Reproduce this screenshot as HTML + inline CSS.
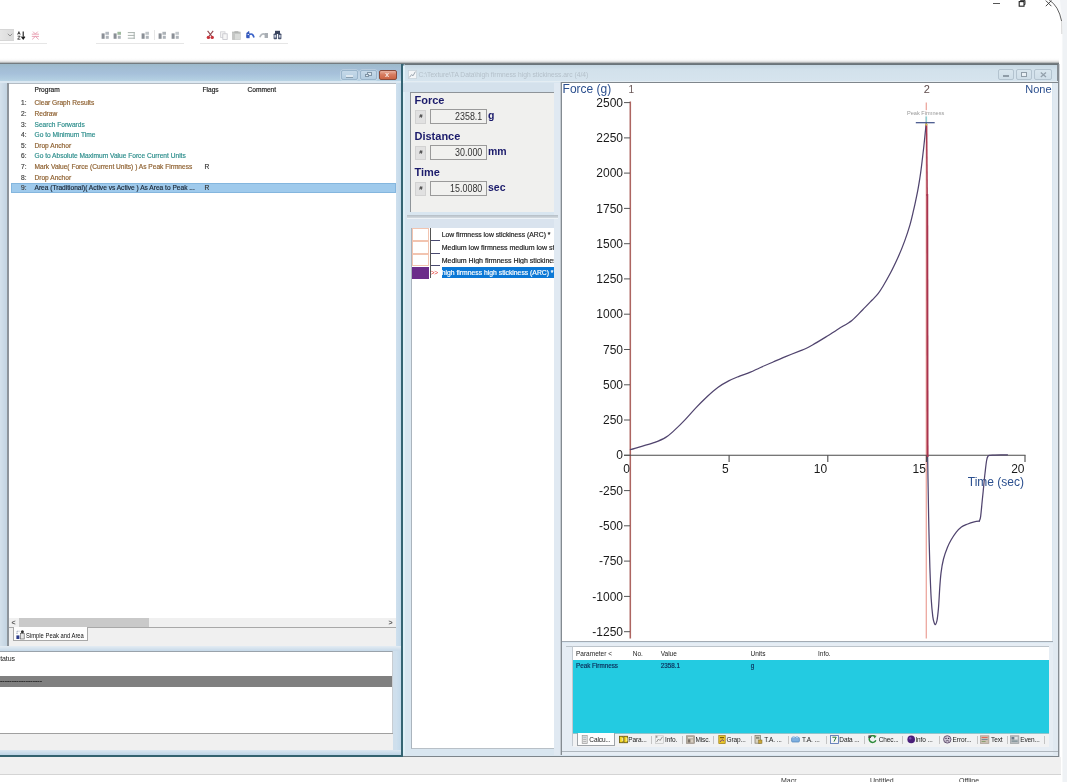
<!DOCTYPE html>
<html><head><meta charset="utf-8"><title>Texture Analyser</title>
<style>
html,body{margin:0;padding:0;}
body{width:1067px;height:782px;overflow:hidden;position:relative;background:#fff;font-family:"Liberation Sans",sans-serif;}
#root{filter:blur(0.4px);position:absolute;left:0;top:0;width:1067px;height:782px;overflow:hidden;background:#fff;}
#root div,#root span,#root svg{position:absolute;}
#root span{white-space:pre;line-height:1;}
.k{-webkit-text-stroke:0.18px currentColor;}
.b{font-weight:bold;}
</style></head><body><div id="root">

<!-- toolbar -->
<div style="left:0px;top:29px;width:14px;height:12px;background:linear-gradient(to right,#e6e6e6,#dadada);border-top:1px solid #d6d6d6;border-bottom:1px solid #d6d6d6;box-sizing:border-box;"></div>
<div style="left:0px;top:43px;width:47px;height:1px;background:#e6e6e6;"></div>
<div style="left:96px;top:43px;width:88px;height:1px;background:#e6e6e6;"></div>
<div style="left:200px;top:43px;width:88px;height:1px;background:#e6e6e6;"></div>
<div style="left:154px;top:30px;width:1px;height:10px;background:#e6e6e6;"></div>
<svg style="left:7px;top:33px" width="6" height="4" viewBox="0 0 6 4"><path d="M0.8 0.8 L3 3 L5.2 0.8" stroke="#8a8a8a" stroke-width="0.9" fill="none"/></svg>
<svg style="left:17px;top:30.5px" width="9" height="9" viewBox="0 0 9 9"><path d="M0.6 3.6 L1.9 0.6 L3.2 3.6 M1 2.6 H2.8 M0.6 5.2 H3.2 L0.6 8.2 H3.4" stroke="#2a2a2a" stroke-width="0.8" fill="none"/><path d="M6.2 0.6 V7.4 M4.5 5.6 L6.2 8 L7.9 5.6" stroke="#1a1a1a" stroke-width="1.1" fill="none"/></svg>
<svg style="left:31px;top:30.5px" width="9" height="9" viewBox="0 0 9 9"><path d="M2 0.6 L4.4 3 L6.8 0.6 M0.8 3.2 H8 M0.8 5.4 H8 M4.4 5.4 L1.2 8.4 M4.4 5.4 L7.6 8.4" stroke="#e79aae" stroke-width="0.9" fill="none"/></svg>
<svg style="left:100.5px;top:30.5px" width="9" height="9" viewBox="0 0 9 9"><rect x="0.6" y="2.4" width="3" height="5.4" fill="#8a8f96"/><rect x="4.4" y="0.8" width="3.6" height="3" fill="#a0a8b0" opacity="0.8"/><rect x="4.8" y="4.8" width="3" height="3" fill="#aeb4ba"/></svg>
<svg style="left:113px;top:30.5px" width="9" height="9" viewBox="0 0 9 9"><rect x="0.6" y="2.4" width="3" height="5.4" fill="#8a8f96"/><rect x="4.4" y="0.8" width="3.6" height="3" fill="#86a886" opacity="0.8"/><rect x="4.8" y="4.8" width="3" height="3" fill="#aeb4ba"/></svg>
<svg style="left:127px;top:30.5px" width="9" height="9" viewBox="0 0 9 9"><path d="M0.8 1.6 H7.6 M0.8 4.4 H7.6 M0.8 7.2 H7.6 M7.2 1 V8" stroke="#a9b2ae" stroke-width="1"/></svg>
<svg style="left:140.5px;top:30.5px" width="9" height="9" viewBox="0 0 9 9"><rect x="0.6" y="2.4" width="3" height="5.4" fill="#8a8f96"/><rect x="4.4" y="0.8" width="3.6" height="3" fill="#b0b6bc" opacity="0.8"/><rect x="4.8" y="4.8" width="3" height="3" fill="#aeb4ba"/></svg>
<svg style="left:158px;top:30.5px" width="9" height="9" viewBox="0 0 9 9"><rect x="0.6" y="2.4" width="3" height="5.4" fill="#8a8f96"/><rect x="4.4" y="0.8" width="3.6" height="3" fill="#9aa0a6" opacity="0.8"/><rect x="4.8" y="4.8" width="3" height="3" fill="#aeb4ba"/></svg>
<svg style="left:171px;top:30.5px" width="9" height="9" viewBox="0 0 9 9"><rect x="0.6" y="2.4" width="3" height="5.4" fill="#8a8f96"/><rect x="4.4" y="0.8" width="3.6" height="3" fill="#b4babf" opacity="0.8"/><rect x="4.8" y="4.8" width="3" height="3" fill="#aeb4ba"/></svg>
<svg style="left:205.5px;top:30px" width="9" height="10" viewBox="0 0 9 10"><path d="M1.6 0.8 L5.6 6 M7.2 0.8 L3.2 6" stroke="#8e464c" stroke-width="1.1"/><circle cx="2.4" cy="7.4" r="1.7" fill="#c8343c"/><circle cx="6.2" cy="7.4" r="1.7" fill="#c8343c"/></svg>
<svg style="left:220px;top:30.5px" width="8" height="9" viewBox="0 0 8 9"><rect x="0.6" y="0.8" width="4.4" height="5.6" fill="#f3f3f3" stroke="#cfcfd4" stroke-width="0.8"/><rect x="2.8" y="2.8" width="4.4" height="5.6" fill="#f6f6f6" stroke="#c4c4cb" stroke-width="0.8"/></svg>
<svg style="left:232px;top:30.5px" width="10" height="9" viewBox="0 0 10 9"><rect x="0.6" y="1" width="7.6" height="7.4" fill="#c4c6c4" stroke="#b0b2b0" stroke-width="0.6"/><rect x="3" y="3" width="5.8" height="5.6" fill="#d9dbd9"/><rect x="2.4" y="0.2" width="4" height="1.8" fill="#b2b4b2"/></svg>
<svg style="left:246px;top:31px" width="9" height="8" viewBox="0 0 9 8"><path d="M1 6.8 V2.4 H3.6 M1 2.4 L3.2 0.6" stroke="#2f55b8" stroke-width="1.3" fill="none"/><path d="M3 3.8 Q6.6 1.4 8 6.4" stroke="#3a62c8" stroke-width="1.7" fill="none"/><rect x="0.6" y="4" width="3" height="3.2" fill="#3358bf"/></svg>
<svg style="left:259px;top:31px" width="10" height="8" viewBox="0 0 10 8"><path d="M0.8 6.2 Q2.6 1.8 6 3.4" stroke="#b3b8bd" stroke-width="1.7" fill="none"/><rect x="5.6" y="2" width="3.4" height="5" fill="#a9aeb4"/></svg>
<svg style="left:272.5px;top:30px" width="9" height="10" viewBox="0 0 9 10"><rect x="0.6" y="3.4" width="3.4" height="5.8" rx="0.8" fill="#4a5570"/><rect x="5" y="3.4" width="3.4" height="5.8" rx="0.8" fill="#4a5570"/><rect x="2" y="0.8" width="5" height="3.2" fill="#39435c"/><rect x="1.4" y="5" width="1.8" height="2.6" fill="#c8cedc"/><rect x="5.8" y="5" width="1.8" height="2.6" fill="#c8cedc"/></svg>
<div style="left:0px;top:58px;width:1058.6px;height:6px;background:linear-gradient(to bottom,#ffffff 0%,#fbfbfb 25%,#eeeeee 50%,#cfd0d0 70%,#8d9295 84%,#596368 100%);"></div>
<!-- left window -->
<div style="left:0px;top:64px;width:401px;height:692px;background:#cfdfec;"></div>
<div style="left:0px;top:64px;width:401px;height:17px;background:linear-gradient(to bottom,#9cb9c9 0%,#a2bdd3 22%,#a6c0da 55%,#b0cce0 85%,#b8d3e4 100%);"></div>
<div style="left:0px;top:80.8px;width:401px;height:2.4px;background:#dbe8f2;"></div>
<div style="left:8.5px;top:83px;width:387.5px;height:0.8px;background:#b4bcc4;"></div>
<div style="left:401.2px;top:64px;width:1.8px;height:693px;background:#356473;"></div>
<div style="left:0px;top:755px;width:403px;height:1.5px;background:#33626f;"></div>
<div style="left:395.8px;top:83px;width:5.4px;height:672px;background:linear-gradient(to right,#cfe0ee,#c3d9ea);"></div>
<div style="left:0px;top:83px;width:7px;height:563px;background:linear-gradient(to right,#d4e1ec,#c2d3e1);"></div>
<div style="left:7px;top:83px;width:1.5px;height:563px;background:#8d949b;"></div>
<div style="left:8.5px;top:83.5px;width:387px;height:544px;background:#fff;"></div>
<div style="left:8.5px;top:627px;width:387px;height:18.5px;background:#f0f0f0;border-top:1px solid #a8a8a8;box-sizing:border-box;"></div>
<div style="left:0px;top:645.5px;width:401px;height:5.5px;background:linear-gradient(to bottom,#e4ecf3,#c6d9e9);"></div>
<div style="left:0px;top:651px;width:393px;height:82px;background:#fff;border-top:1px solid #9aa3ab;border-right:1px solid #c8cdd2;box-sizing:border-box;"></div>
<div style="left:0px;top:733px;width:393px;height:16.7px;background:#f0f0f0;border-top:1px solid #a0a0a0;box-sizing:border-box;"></div>
<div style="left:0px;top:749.7px;width:401px;height:5.5px;background:linear-gradient(to bottom,#dbe7f1,#bcd4e6);"></div>
<div style="left:341px;top:69.5px;width:17px;height:10px;background:linear-gradient(to bottom,#c6d9e9,#b4cde1);border:1px solid #9ab5cb;border-radius:2px;box-sizing:border-box;box-shadow:0 0 0 0.6px rgba(255,255,255,.45);"></div>
<div style="left:346px;top:75px;width:7px;height:1.6px;background:#dfe9f1;box-shadow:0 0.8px 0 #7f93a4;"></div>
<div style="left:360px;top:69.5px;width:17px;height:10px;background:linear-gradient(to bottom,#c6d9e9,#b4cde1);border:1px solid #9ab5cb;border-radius:2px;box-sizing:border-box;box-shadow:0 0 0 0.6px rgba(255,255,255,.45);"></div>
<div style="left:366.5px;top:72.3px;width:5px;height:4px;background:#dfe9f1;border:0.8px solid #8094a5;box-sizing:border-box;"></div>
<div style="left:364.5px;top:73.6px;width:4px;height:3px;background:#dfe9f1;border:0.8px solid #8094a5;box-sizing:border-box;"></div>
<div style="left:379px;top:69.5px;width:18px;height:10px;background:linear-gradient(to bottom,#e8b09e 0%,#d77c60 45%,#cc6444 100%);border:1px solid #8a4a3a;border-radius:2px;box-sizing:border-box;"></div>
<span class="" style="left:385px;top:70.8px;font-size:7.5px;color:#f6e6e0;font-weight:bold;">x</span>
<!-- program list -->
<span class="k" style="left:34.5px;top:87px;font-size:6.6px;color:#222;">Program</span>
<span class="k" style="left:202.5px;top:87px;font-size:6.6px;color:#222;">Flags</span>
<span class="k" style="left:247.5px;top:87px;font-size:6.6px;color:#222;">Comment</span>
<div style="left:11px;top:182.6px;width:384.5px;height:10.4px;background:#9fcaec;border:1px solid #84b6de;box-sizing:border-box;"></div>
<span class="k" style="left:21px;top:99.663px;font-size:6.6px;color:#444;">1:</span>
<span class="k" style="left:34.5px;top:99.663px;font-size:6.6px;color:#8f6232;">Clear Graph Results</span>
<span class="k" style="left:21px;top:110.663px;font-size:6.6px;color:#444;">2:</span>
<span class="k" style="left:34.5px;top:110.663px;font-size:6.6px;color:#8f6232;">Redraw</span>
<span class="k" style="left:21px;top:121.663px;font-size:6.6px;color:#444;">3:</span>
<span class="k" style="left:34.5px;top:121.663px;font-size:6.6px;color:#2f8f8d;">Search Forwards</span>
<span class="k" style="left:21px;top:131.663px;font-size:6.6px;color:#444;">4:</span>
<span class="k" style="left:34.5px;top:131.663px;font-size:6.6px;color:#2f8f8d;">Go to Minimum Time</span>
<span class="k" style="left:21px;top:142.663px;font-size:6.6px;color:#444;">5:</span>
<span class="k" style="left:34.5px;top:142.663px;font-size:6.6px;color:#8f6232;">Drop Anchor</span>
<span class="k" style="left:21px;top:152.663px;font-size:6.6px;color:#444;">6:</span>
<span class="k" style="left:34.5px;top:152.663px;font-size:6.6px;color:#2f8f8d;">Go to Absolute Maximum Value Force Current Units</span>
<span class="k" style="left:21px;top:163.663px;font-size:6.6px;color:#444;">7:</span>
<span class="k" style="left:34.5px;top:163.663px;font-size:6.6px;color:#8f6232;">Mark Value( Force (Current Units) ) As Peak Firmness</span>
<span class="k" style="left:204.5px;top:163.663px;font-size:6.6px;color:#333;">R</span>
<span class="k" style="left:21px;top:174.663px;font-size:6.6px;color:#444;">8:</span>
<span class="k" style="left:34.5px;top:174.663px;font-size:6.6px;color:#8f6232;">Drop Anchor</span>
<span class="k" style="left:21px;top:184.663px;font-size:6.6px;color:#444;">9:</span>
<span class="k" style="left:34.5px;top:184.663px;font-size:6.6px;color:#1c2a3a;">Area (Traditional)( Active vs Active ) As Area to Peak ...</span>
<span class="k" style="left:204.5px;top:184.663px;font-size:6.6px;color:#333;">R</span>
<div style="left:8.5px;top:617.5px;width:387px;height:9.5px;background:#f0f0f0;"></div>
<div style="left:19px;top:618px;width:130px;height:9px;background:#c9c9c9;"></div>
<span class="" style="left:11.5px;top:618.5px;font-size:7px;color:#555;font-weight:bold;">&lt;</span>
<span class="" style="left:388.5px;top:618.5px;font-size:7px;color:#555;font-weight:bold;">&gt;</span>
<div style="left:12.5px;top:627px;width:75px;height:14px;background:#fdfdfd;border:1px solid #a8a8a8;border-top:none;box-sizing:border-box;"></div>
<svg style="left:16px;top:629.5px" width="9" height="10" viewBox="0 0 9 10"><rect x="0.4" y="5.4" width="3" height="3.6" fill="#2a3a8a"/><rect x="4.6" y="3.4" width="3.6" height="5.6" fill="#e6e6e6" stroke="#555" stroke-width="0.6"/><circle cx="6.4" cy="1.8" r="1.5" fill="#333"/><path d="M1 4 V1.2 H3.4" stroke="#6a7a9a" stroke-width="0.8" fill="none" stroke-dasharray="1 0.6"/></svg>
<span class="" style="left:26.2px;top:631.8px;font-size:7px;color:#111;transform:scaleX(0.835);transform-origin:0 0;">Simple Peak and Area</span>
<span class="" style="left:0.2px;top:654.8px;font-size:7px;color:#222;letter-spacing:-0.1px;">tatus</span>
<div style="left:0px;top:676px;width:392px;height:10.5px;background:#808080;"></div>
<span class="k" style="left:0px;top:677px;font-size:7px;color:#111;letter-spacing:0px;">------------------</span>
<!-- right window -->
<div style="left:402.5px;top:63.5px;width:6px;height:6px;background:#5d7f8c;"></div>
<div style="left:403px;top:64px;width:656px;height:693px;background:#d9e6f0;border-top-left-radius:4px;"></div>
<div style="left:403px;top:64px;width:655px;height:18px;background:linear-gradient(to bottom,#c3d5e1 0%,#d2e1eb 30%,#d6e4ee 100%);border-top-left-radius:4px;"></div>
<div style="left:1057.3px;top:64px;width:1.3px;height:693px;background:#858c92;"></div>
<div style="left:1058.6px;top:64px;width:1px;height:693px;background:#d0d4d8;"></div>
<div style="left:403px;top:755.6px;width:655.6px;height:1.3px;background:#7d858b;"></div>
<div style="left:405px;top:64px;width:653px;height:1px;background:#6a7479;"></div>
<div style="left:403px;top:66px;width:1.5px;height:689px;background:#dff0f7;"></div>
<div style="left:403px;top:81px;width:655px;height:1px;background:#e4edf3;"></div>
<svg style="left:407.8px;top:70px" width="9" height="9" viewBox="0 0 9 9"><rect x="0.4" y="0.4" width="8.2" height="8.2" fill="#f4f6f8" stroke="#c9d2da" stroke-width="0.8"/><path d="M1.4 7.4 L3.6 4.6 L5 5.8 L7.4 1.6" stroke="#9aa4ae" stroke-width="1" fill="none"/></svg>
<span class="" style="left:418.5px;top:71.5px;font-size:6.7px;color:#b4c0ca;">C:\Texture\TA Data\high firmness high stickiness.arc (4/4)</span>
<div style="left:997.5px;top:69.3px;width:16.5px;height:10.3px;background:linear-gradient(to bottom,#d9e6ee,#cfdee8);border:1px solid #b3c3cf;border-radius:2px;box-sizing:border-box;"></div>
<div style="left:1015.8px;top:69.3px;width:16.5px;height:10.3px;background:linear-gradient(to bottom,#d9e6ee,#cfdee8);border:1px solid #b3c3cf;border-radius:2px;box-sizing:border-box;"></div>
<div style="left:1034px;top:69.3px;width:17.5px;height:10.3px;background:linear-gradient(to bottom,#d9e6ee,#cfdee8);border:1px solid #b3c3cf;border-radius:2px;box-sizing:border-box;"></div>
<div style="left:1003px;top:75.2px;width:5.5px;height:1.8px;background:#e9f0f5;border:0.6px solid #8f9ca7;box-sizing:border-box;"></div>
<div style="left:1021.3px;top:72.2px;width:5.5px;height:4.6px;background:#e9f0f5;border:0.8px solid #8f9ca7;box-sizing:border-box;"></div>
<svg style="left:1039.5px;top:72px" width="7" height="6" viewBox="0 0 7 6"><path d="M0.8 0.6 L6 5 M6 0.6 L0.8 5" stroke="#93a0ab" stroke-width="1.3"/></svg>
<div style="left:410px;top:92px;width:144px;height:119.5px;background:#f0f0ee;border-top:1.5px solid #8e9499;border-left:1.5px solid #8e9499;box-sizing:border-box;"></div>
<div style="left:403px;top:83px;width:151px;height:9px;background:#d4e1ec;"></div>
<div style="left:410px;top:218.5px;width:144px;height:9.5px;background:#d9e3ee;"></div>
<span class="" style="left:414.5px;top:94.6px;font-size:11px;color:#1b1b6b;font-weight:bold;">Force</span>
<div style="left:415.3px;top:109.5px;width:11px;height:14px;background:#e1e1e1;border:1px solid #d2d2d2;box-sizing:border-box;"></div>
<span class="" style="left:419.3px;top:113px;font-size:6px;color:#222;font-weight:bold;">#</span>
<div style="left:430px;top:109px;width:57px;height:15px;background:#f1f1ef;border:1px solid #9a9a9a;box-sizing:border-box;"></div>
<span style="left:430px;top:112px;width:52.3px;text-align:right;font-size:10px;color:#333;transform:scaleX(0.89);transform-origin:100% 50%;">2358.1</span>
<span class="" style="left:488px;top:109.7px;font-size:11.3px;color:#1b1b6b;font-weight:bold;transform:scaleX(0.93);transform-origin:0 50%;">g</span>
<span class="" style="left:414.5px;top:130.6px;font-size:11px;color:#1b1b6b;font-weight:bold;">Distance</span>
<div style="left:415.3px;top:145.5px;width:11px;height:14px;background:#e1e1e1;border:1px solid #d2d2d2;box-sizing:border-box;"></div>
<span class="" style="left:419.3px;top:149px;font-size:6px;color:#222;font-weight:bold;">#</span>
<div style="left:430px;top:145px;width:57px;height:15px;background:#f1f1ef;border:1px solid #9a9a9a;box-sizing:border-box;"></div>
<span style="left:430px;top:148px;width:52.3px;text-align:right;font-size:10px;color:#333;transform:scaleX(0.89);transform-origin:100% 50%;">30.000</span>
<span class="" style="left:488px;top:145.7px;font-size:11.3px;color:#1b1b6b;font-weight:bold;transform:scaleX(0.93);transform-origin:0 50%;">mm</span>
<span class="" style="left:414.5px;top:166.6px;font-size:11px;color:#1b1b6b;font-weight:bold;">Time</span>
<div style="left:415.3px;top:181.5px;width:11px;height:14px;background:#e1e1e1;border:1px solid #d2d2d2;box-sizing:border-box;"></div>
<span class="" style="left:419.3px;top:185px;font-size:6px;color:#222;font-weight:bold;">#</span>
<div style="left:430px;top:181px;width:57px;height:15px;background:#f1f1ef;border:1px solid #9a9a9a;box-sizing:border-box;"></div>
<span style="left:430px;top:184px;width:52.3px;text-align:right;font-size:10px;color:#333;transform:scaleX(0.89);transform-origin:100% 50%;">15.0080</span>
<span class="" style="left:488px;top:181.7px;font-size:11.3px;color:#1b1b6b;font-weight:bold;transform:scaleX(0.93);transform-origin:0 50%;">sec</span>
<div style="left:411px;top:228px;width:143px;height:521px;background:#fff;border-left:1px solid #aab4bd;border-bottom:1px solid #b8c0c7;box-sizing:border-box;"></div>
<div style="left:411.5px;top:228px;width:17.5px;height:13px;background:#fff;border:1px solid #f2c4b0;box-sizing:border-box;"></div>
<div style="left:430.5px;top:240.2px;width:9.5px;height:1px;background:#4a4a70;"></div>
<span class="k" style="left:441.7px;top:232.1px;width:112px;overflow:hidden;font-size:6.8px;color:#222;">Low firmness low stickiness (ARC) *</span>
<div style="left:411.5px;top:241px;width:17.5px;height:12.599999999999994px;background:#fff;border:1px solid #f2c4b0;box-sizing:border-box;"></div>
<div style="left:430.5px;top:252.79999999999998px;width:9.5px;height:1px;background:#4a4a70;"></div>
<span class="k" style="left:441.7px;top:244.1px;width:112px;overflow:hidden;font-size:7.03px;color:#222;">Medium low firmness medium low stickiness</span>
<div style="left:411.5px;top:253.6px;width:17.5px;height:12.400000000000006px;background:#fff;border:1px solid #f2c4b0;box-sizing:border-box;"></div>
<div style="left:430.5px;top:265.2px;width:9.5px;height:1px;background:#4a4a70;"></div>
<span class="k" style="left:441.7px;top:256.7px;width:112px;overflow:hidden;font-size:7.03px;color:#222;">Medium High firmness High stickiness</span>
<div style="left:411.5px;top:266.5px;width:17.5px;height:12.0px;background:#6b2c8a;"></div>
<div style="left:441.7px;top:266.8px;width:112px;height:11.3px;background:#0b78d6;"></div>
<span class="" style="left:430.8px;top:269.8px;font-size:6.5px;color:#e0302a;letter-spacing:-0.3px;">&gt;&gt;</span>
<span class="k" style="left:441.7px;top:270.1px;width:112px;overflow:hidden;font-size:6.8px;color:#fff;">high firmness high stickiness (ARC) *</span>
<div style="left:429.8px;top:228px;width:1px;height:50px;background:#555;"></div>
<div style="left:554px;top:83px;width:6.6px;height:672px;background:#e0e9f2;"></div>
<div style="left:559.9px;top:82px;width:0.8px;height:673px;background:#c3cad1;"></div>
<div style="left:560.7px;top:82px;width:1.5px;height:673px;background:#848b91;"></div>
<div style="left:406.5px;top:215.2px;width:151.5px;height:2.6px;background:linear-gradient(to bottom,#b4bdc5,#d4dbe1);"></div>
<div style="left:406.5px;top:217.8px;width:151.5px;height:1px;background:#eef3f7;"></div>
<div style="left:562.2px;top:82.5px;width:490.3px;height:558px;background:#fff;"></div>
<div style="left:561.5px;top:81.8px;width:496px;height:1.2px;background:#7f868c;"></div>
<div style="left:1052.5px;top:82.5px;width:5px;height:673px;background:#e0e9f1;"></div>
<svg style="left:0;top:0" width="1067" height="782" viewBox="0 0 1067 782">
<line x1="630.3" y1="101.5" x2="630.3" y2="638.5" stroke="#ad6561" stroke-width="1.55"/>
<line x1="926.3" y1="102.5" x2="926.3" y2="638.5" stroke="#eda79f" stroke-width="1.3"/>
<line x1="624" y1="455.3" x2="1025.5" y2="455.3" stroke="#4a4a4a" stroke-width="1.1"/>
<line x1="624" y1="102.6" x2="630" y2="102.6" stroke="#555" stroke-width="1"/>
<text x="623" y="106.7" text-anchor="end" font-size="12" fill="#1a1a1a">2500</text>
<line x1="624" y1="137.9" x2="630" y2="137.9" stroke="#555" stroke-width="1"/>
<text x="623" y="142.0" text-anchor="end" font-size="12" fill="#1a1a1a">2250</text>
<line x1="624" y1="173.1" x2="630" y2="173.1" stroke="#555" stroke-width="1"/>
<text x="623" y="177.2" text-anchor="end" font-size="12" fill="#1a1a1a">2000</text>
<line x1="624" y1="208.4" x2="630" y2="208.4" stroke="#555" stroke-width="1"/>
<text x="623" y="212.5" text-anchor="end" font-size="12" fill="#1a1a1a">1750</text>
<line x1="624" y1="243.7" x2="630" y2="243.7" stroke="#555" stroke-width="1"/>
<text x="623" y="247.8" text-anchor="end" font-size="12" fill="#1a1a1a">1500</text>
<line x1="624" y1="278.9" x2="630" y2="278.9" stroke="#555" stroke-width="1"/>
<text x="623" y="283.1" text-anchor="end" font-size="12" fill="#1a1a1a">1250</text>
<line x1="624" y1="314.2" x2="630" y2="314.2" stroke="#555" stroke-width="1"/>
<text x="623" y="318.3" text-anchor="end" font-size="12" fill="#1a1a1a">1000</text>
<line x1="624" y1="349.5" x2="630" y2="349.5" stroke="#555" stroke-width="1"/>
<text x="623" y="353.6" text-anchor="end" font-size="12" fill="#1a1a1a">750</text>
<line x1="624" y1="384.8" x2="630" y2="384.8" stroke="#555" stroke-width="1"/>
<text x="623" y="388.9" text-anchor="end" font-size="12" fill="#1a1a1a">500</text>
<line x1="624" y1="420.0" x2="630" y2="420.0" stroke="#555" stroke-width="1"/>
<text x="623" y="424.1" text-anchor="end" font-size="12" fill="#1a1a1a">250</text>
<line x1="624" y1="455.3" x2="630" y2="455.3" stroke="#555" stroke-width="1"/>
<text x="623" y="459.4" text-anchor="end" font-size="12" fill="#1a1a1a">0</text>
<line x1="624" y1="490.6" x2="630" y2="490.6" stroke="#555" stroke-width="1"/>
<text x="623" y="494.7" text-anchor="end" font-size="12" fill="#1a1a1a">-250</text>
<line x1="624" y1="525.8" x2="630" y2="525.8" stroke="#555" stroke-width="1"/>
<text x="623" y="529.9" text-anchor="end" font-size="12" fill="#1a1a1a">-500</text>
<line x1="624" y1="561.1" x2="630" y2="561.1" stroke="#555" stroke-width="1"/>
<text x="623" y="565.2" text-anchor="end" font-size="12" fill="#1a1a1a">-750</text>
<line x1="624" y1="596.4" x2="630" y2="596.4" stroke="#555" stroke-width="1"/>
<text x="623" y="600.5" text-anchor="end" font-size="12" fill="#1a1a1a">-1000</text>
<line x1="624" y1="631.7" x2="630" y2="631.7" stroke="#555" stroke-width="1"/>
<text x="623" y="635.8" text-anchor="end" font-size="12" fill="#1a1a1a">-1250</text>
<text x="630.0" y="473.2" text-anchor="end" font-size="12" fill="#1a1a1a">0</text>
<line x1="729.1" y1="455.3" x2="729.1" y2="462" stroke="#4a4a4a" stroke-width="1.1"/>
<text x="728.6" y="473.2" text-anchor="end" font-size="12" fill="#1a1a1a">5</text>
<line x1="827.8" y1="455.3" x2="827.8" y2="462" stroke="#4a4a4a" stroke-width="1.1"/>
<text x="827.2" y="473.2" text-anchor="end" font-size="12" fill="#1a1a1a">10</text>
<line x1="926.4" y1="455.3" x2="926.4" y2="462" stroke="#4a4a4a" stroke-width="1.1"/>
<text x="925.9" y="473.2" text-anchor="end" font-size="12" fill="#1a1a1a">15</text>
<line x1="1025.0" y1="455.3" x2="1025.0" y2="462" stroke="#4a4a4a" stroke-width="1.1"/>
<text x="1024.5" y="473.2" text-anchor="end" font-size="12" fill="#1a1a1a">20</text>
<text x="562.6" y="92.8" font-size="12" fill="#2b4f8e">Force (g)</text>
<text x="1051.5" y="92.8" text-anchor="end" font-size="11" fill="#2b4f8e">None</text>
<text x="1024" y="486" text-anchor="end" font-size="12" fill="#2b4f8e">Time (sec)</text>
<text x="628.4" y="92.7" font-size="10" fill="#6a5858">1</text>
<text x="923.8" y="92.8" font-size="11" fill="#5c4a4a">2</text>
<path d="M630.4,449.6 C632.3,449.1 637.6,447.5 641.7,446.3 C645.8,445.1 650.8,443.9 654.8,442.4 C658.8,440.9 662.5,439.4 665.7,437.4 C669.0,435.4 671.0,433.4 674.3,430.4 C677.5,427.4 681.6,423.4 685.2,419.6 C688.8,415.8 692.5,411.4 696.1,407.6 C699.7,403.8 703.4,400.1 707.0,396.7 C710.6,393.3 714.2,390.0 717.8,387.4 C721.4,384.8 725.1,382.8 728.7,380.9 C732.3,379.0 736.0,377.6 739.6,376.1 C743.2,374.7 747.0,373.6 750.4,372.2 C753.8,370.8 756.2,369.4 760.0,367.7 C763.8,366.0 768.7,363.9 773.1,362.0 C777.5,360.1 781.8,358.2 786.2,356.4 C790.6,354.6 796.1,352.4 799.4,351.1 C802.7,349.8 803.7,349.5 805.9,348.5 C808.1,347.5 809.2,346.9 812.5,345.0 C815.8,343.1 821.2,339.8 825.6,337.1 C830.0,334.4 834.3,331.6 838.7,328.8 C843.1,326.0 847.9,323.5 851.9,320.4 C855.9,317.3 859.1,313.4 862.5,310.0 C865.9,306.6 869.6,302.7 872.2,300.0 C874.8,297.3 876.3,295.9 878.1,293.6 C879.9,291.3 880.9,289.7 883.0,286.2 C885.1,282.7 888.1,277.4 890.7,272.5 C893.3,267.6 896.0,261.8 898.4,256.5 C900.8,251.2 902.9,245.8 904.8,240.6 C906.7,235.4 908.4,230.2 909.9,225.1 C911.4,219.9 912.4,215.2 913.7,209.7 C915.0,204.1 916.4,197.3 917.5,191.8 C918.6,186.3 919.3,181.6 920.1,176.5 C920.9,171.4 921.5,166.3 922.1,161.2 C922.7,156.1 923.4,150.5 923.9,145.8 C924.4,141.1 924.9,136.4 925.2,133.0 C925.6,129.6 925.8,126.9 926.0,125.3 C926.2,123.7 926.2,123.5 926.3,123.2" fill="none" stroke="#50446e" stroke-width="1.25" stroke-linecap="round"/>
<path d="M927.6,455.4 C927.7,461.4 928.0,478.8 928.2,491.2 C928.4,503.6 928.6,516.8 928.9,529.6 C929.2,542.4 929.5,556.5 929.9,568.0 C930.3,579.5 930.7,590.6 931.2,598.7 C931.7,606.8 932.3,612.5 932.8,616.6 C933.3,620.7 933.9,622.1 934.4,623.4 C934.9,624.7 935.2,624.9 935.6,624.4 C936.0,623.9 936.5,623.1 937.0,620.5 C937.5,617.9 937.9,614.2 938.4,608.9 C938.9,603.6 939.3,594.5 939.7,588.5 C940.1,582.5 940.4,578.0 941.0,573.1 C941.6,568.2 942.4,563.3 943.5,559.0 C944.6,554.7 946.1,550.7 947.4,547.5 C948.7,544.3 949.7,542.4 951.2,539.8 C952.7,537.2 954.6,534.2 956.3,532.1 C958.0,530.0 959.5,528.4 961.4,527.0 C963.3,525.6 965.7,524.9 967.8,524.0 C969.9,523.1 972.3,522.4 974.2,521.9 C976.1,521.4 978.4,521.2 979.3,521.1" fill="none" stroke="#50446e" stroke-width="1.25" stroke-linecap="round"/>
<path d="M979.3,521.1 C979.5,520.4 980.2,519.6 980.6,516.8 C981.0,513.9 981.5,508.3 981.9,504.0 C982.3,499.7 982.7,496.3 983.2,491.2 C983.7,486.1 984.4,478.4 985.0,473.3 C985.6,468.2 986.1,463.4 986.6,460.5 C987.1,457.6 987.4,457.1 988.0,456.2 C988.6,455.3 988.8,455.5 990.0,455.3 C991.2,455.1 992.1,455.2 995.0,455.1 C997.9,455.0 1005.4,454.9 1007.5,454.8" fill="none" stroke="#50446e" stroke-width="1.25" stroke-linecap="round"/>
<line x1="926.6" y1="124" x2="927.2" y2="196" stroke="#a83850" stroke-width="1.45"/>
<line x1="927.3" y1="194" x2="927.6" y2="457" stroke="#a8344f" stroke-width="1.9"/>
<line x1="926.3" y1="114.5" x2="926.3" y2="122" stroke="#8fd0d4" stroke-width="1.6"/>
<line x1="915.8" y1="122.7" x2="934.7" y2="122.7" stroke="#3d4f86" stroke-width="1.2"/>
<circle cx="926.3" cy="124.6" r="1.1" fill="#d9c84a"/>
<rect x="906" y="110" width="40" height="6.5" fill="#fff" opacity="0.8"/>
<text x="907" y="115.2" font-size="5.6" fill="#9a9a9a">Peak Firmness</text>
</svg>
<div style="left:561.5px;top:640.6px;width:491px;height:0.6px;background:#dfe5ea;"></div>
<div style="left:561.5px;top:641.2px;width:491px;height:1.3px;background:#a3abb3;"></div>
<div style="left:561.5px;top:642.5px;width:491px;height:112.5px;background:#e6edf4;"></div>
<div style="left:572.5px;top:647px;width:476px;height:13px;background:#fff;"></div>
<div style="left:572.5px;top:660px;width:476px;height:73px;background:#23cbe1;"></div>
<div style="left:572.5px;top:733px;width:476px;height:1px;background:#8fc4cc;"></div>
<div style="left:572.5px;top:734px;width:476px;height:13.2px;background:#f1f2f3;"></div>
<div style="left:566px;top:646px;width:482.5px;height:1px;background:#bcc4cb;"></div>
<div style="left:571.5px;top:646px;width:1px;height:100px;background:#c2c9d0;"></div>
<div style="left:561.5px;top:751px;width:496px;height:1px;background:#aeb6bd;"></div>
<span class="" style="left:576px;top:650.8px;font-size:6.5px;color:#222;">Parameter &lt;</span>
<span class="" style="left:632.7px;top:650.8px;font-size:6.5px;color:#222;">No.</span>
<span class="" style="left:660.7px;top:650.8px;font-size:6.5px;color:#222;">Value</span>
<span class="" style="left:750.6px;top:650.8px;font-size:6.5px;color:#222;">Units</span>
<span class="" style="left:818px;top:650.8px;font-size:6.5px;color:#222;">Info.</span>
<span class="k" style="left:576px;top:663.3px;font-size:6.3px;color:#0b2d5a;">Peak Firmness</span>
<span class="k" style="left:660.7px;top:663.3px;font-size:6.3px;color:#0b2d5a;">2358.1</span>
<span class="k" style="left:750.8px;top:663.3px;font-size:6.3px;color:#0b2d5a;">g</span>
<div style="left:576.5px;top:732.8px;width:38px;height:13.6px;background:#fdfdfd;border:1px solid #9fa4a9;border-top:none;box-sizing:border-box;"></div>
<div style="left:651px;top:735.8px;width:1px;height:8.2px;background:#c4c4c4;"></div>
<div style="left:682px;top:735.8px;width:1px;height:8.2px;background:#c4c4c4;"></div>
<div style="left:712.6px;top:735.8px;width:1px;height:8.2px;background:#c4c4c4;"></div>
<div style="left:750.5px;top:735.8px;width:1px;height:8.2px;background:#c4c4c4;"></div>
<div style="left:787.7px;top:735.8px;width:1px;height:8.2px;background:#c4c4c4;"></div>
<div style="left:825.9px;top:735.8px;width:1px;height:8.2px;background:#c4c4c4;"></div>
<div style="left:864.3px;top:735.8px;width:1px;height:8.2px;background:#c4c4c4;"></div>
<div style="left:901.7px;top:735.8px;width:1px;height:8.2px;background:#c4c4c4;"></div>
<div style="left:939.4px;top:735.8px;width:1px;height:8.2px;background:#c4c4c4;"></div>
<div style="left:977px;top:735.8px;width:1px;height:8.2px;background:#c4c4c4;"></div>
<div style="left:1006.5px;top:735.8px;width:1px;height:8.2px;background:#c4c4c4;"></div>
<div style="left:1044.2px;top:735.8px;width:1px;height:8.2px;background:#c4c4c4;"></div>
<span style="left:589.3px;top:736.9px;font-size:6.5px;color:#222;display:inline-block;width:22px;text-align:justify;letter-spacing:-0.1px;">Calcu...</span>
<svg style="left:581px;top:735.3px" width="9" height="9" viewBox="0 0 9 9"><rect x="1.2" y="0.5" width="5" height="8" fill="#e4e4e4" stroke="#9a9a9a" stroke-width="0.7"/><rect x="2.2" y="1.6" width="3" height="1.6" fill="#b8c4cc"/><rect x="2.2" y="4.2" width="3" height="0.8" fill="#aaa"/><rect x="2.2" y="6" width="3" height="0.8" fill="#aaa"/></svg>
<span style="left:628.2px;top:736.9px;font-size:6.5px;color:#222;display:inline-block;width:19px;text-align:justify;letter-spacing:-0.1px;">Para...</span>
<svg style="left:618.6px;top:735.3px" width="9" height="9" viewBox="0 0 9 9"><rect x="0.5" y="1.3" width="3.6" height="6.4" fill="#f1d31f" stroke="#6e5f12" stroke-width="0.9"/><rect x="4.9" y="1.3" width="3.6" height="6.4" fill="#f1d31f" stroke="#6e5f12" stroke-width="0.9"/><rect x="2.6" y="2.8" width="1.6" height="3.4" fill="#f7e980"/><rect x="6.9" y="2.8" width="1.6" height="3.4" fill="#f7e980"/></svg>
<span style="left:665px;top:736.9px;font-size:6.5px;color:#222;display:inline-block;width:13px;text-align:justify;letter-spacing:-0.1px;">Info.</span>
<svg style="left:654.6px;top:735.3px" width="9" height="9" viewBox="0 0 9 9"><rect x="0.5" y="0.8" width="8" height="7.6" fill="#f1f1f1" stroke="#bdbdbd" stroke-width="0.6"/><path d="M1.5 7 L3.5 4 L5 5.5 L7.5 1.8" stroke="#8a8a8a" stroke-width="0.9" fill="none"/><rect x="0.8" y="0.8" width="1.6" height="2" fill="#9a9a9a"/></svg>
<span style="left:695.4px;top:736.9px;font-size:6.5px;color:#222;display:inline-block;width:13.6px;text-align:justify;letter-spacing:-0.1px;">Misc.</span>
<svg style="left:685.8px;top:735.3px" width="9" height="9" viewBox="0 0 9 9"><rect x="0.5" y="0.8" width="8" height="7.6" fill="#b5ab9e" stroke="#8d8478" stroke-width="0.6"/><rect x="2" y="2" width="5" height="1.3" fill="#e5ded2"/><rect x="2" y="4.4" width="2" height="3" fill="#7a7268"/><rect x="5" y="4.4" width="2" height="3" fill="#d8cfc2"/></svg>
<span style="left:726.5px;top:736.9px;font-size:6.5px;color:#222;display:inline-block;width:20px;text-align:justify;letter-spacing:-0.1px;">Grap...</span>
<svg style="left:717.7px;top:735.3px" width="9" height="9" viewBox="0 0 9 9"><rect x="0.8" y="0.6" width="6.4" height="8" fill="#e8c62c" stroke="#9c7c10" stroke-width="0.7"/><rect x="2" y="2" width="4" height="1.2" fill="#7a5a0a"/><path d="M2 7 L4 4.6 L6 6" stroke="#6b3a8a" stroke-width="0.9" fill="none"/></svg>
<span style="left:764.2px;top:736.9px;font-size:6.5px;color:#222;display:inline-block;width:19px;text-align:justify;letter-spacing:-0.1px;">T.A. ...</span>
<svg style="left:754px;top:735.3px" width="9" height="9" viewBox="0 0 9 9"><rect x="1" y="0.6" width="5.6" height="7.6" fill="#d8d2c0" stroke="#7d7768" stroke-width="0.7"/><rect x="2" y="1.8" width="3.4" height="2" fill="#8a8a7a"/><rect x="4.6" y="5" width="3.4" height="3.4" fill="#c9a63a" stroke="#7d6a2a" stroke-width="0.5"/></svg>
<span style="left:802px;top:736.9px;font-size:6.5px;color:#222;display:inline-block;width:19px;text-align:justify;letter-spacing:-0.1px;">T.A. ...</span>
<svg style="left:791.3px;top:735.3px" width="9" height="9" viewBox="0 0 9 9"><rect x="0.6" y="2.4" width="7.8" height="4.6" rx="1" fill="#7fb0e0" stroke="#4c82b8" stroke-width="0.7"/><rect x="1.6" y="1" width="2" height="2" fill="#a9cdee"/><rect x="5" y="1" width="2" height="2" fill="#a9cdee"/></svg>
<span style="left:839.3px;top:736.9px;font-size:6.5px;color:#222;display:inline-block;width:21px;text-align:justify;letter-spacing:-0.1px;">Data ...</span>
<svg style="left:829.7px;top:735.3px" width="9" height="9" viewBox="0 0 9 9"><rect x="0.5" y="0.6" width="8" height="7.8" fill="#f6f6f6" stroke="#4a6ab0" stroke-width="0.8"/><path d="M2.4 2.2 H6.2 L4 6.6" stroke="#2a7a3a" stroke-width="1" fill="none"/></svg>
<span style="left:878.7px;top:736.9px;font-size:6.5px;color:#222;display:inline-block;width:20px;text-align:justify;letter-spacing:-0.1px;">Chec...</span>
<svg style="left:868px;top:735.3px" width="10" height="9" viewBox="0 0 10 9"><path d="M6.6 1.2 A3.4 3.4 0 1 0 7.8 5.2" stroke="#2d8a3a" stroke-width="1.5" fill="none"/><path d="M5.2 0.2 L8.6 0.8 L6.6 3.4 Z" fill="#2d8a3a"/><rect x="0.4" y="0.4" width="2.6" height="2.6" fill="#4a4a4a"/></svg>
<span style="left:915.4px;top:736.9px;font-size:6.5px;color:#222;display:inline-block;width:20px;text-align:justify;letter-spacing:-0.1px;">Info ...</span>
<svg style="left:906.5px;top:735.3px" width="9" height="9" viewBox="0 0 9 9"><circle cx="4.2" cy="4.4" r="3.8" fill="#4a1f7a"/><circle cx="3.2" cy="3.2" r="1.2" fill="#7a4fb0"/></svg>
<span style="left:952.6px;top:736.9px;font-size:6.5px;color:#222;display:inline-block;width:21px;text-align:justify;letter-spacing:-0.1px;">Error...</span>
<svg style="left:943.4px;top:735.3px" width="9" height="9" viewBox="0 0 9 9"><circle cx="4.3" cy="4.4" r="3.7" fill="#cfc6d6" stroke="#5a4a6a" stroke-width="0.9"/><circle cx="3" cy="3.4" r="0.7" fill="#3a2a4a"/><circle cx="5.6" cy="3.4" r="0.7" fill="#3a2a4a"/><path d="M2.6 6.2 Q4.3 4.8 6 6.2" stroke="#3a2a4a" stroke-width="0.7" fill="none"/></svg>
<span style="left:991px;top:736.9px;font-size:6.5px;color:#222;display:inline-block;width:12px;text-align:justify;letter-spacing:-0.1px;">Text</span>
<svg style="left:980px;top:735.3px" width="10" height="9" viewBox="0 0 10 9"><rect x="0.5" y="0.8" width="8.4" height="7.6" fill="#cbbfb2" stroke="#9d9184" stroke-width="0.6"/><rect x="1.6" y="2" width="6" height="1" fill="#e06a5a"/><rect x="1.6" y="4" width="6" height="1" fill="#7a8a9a"/><rect x="1.6" y="6" width="4" height="1" fill="#8aa070"/></svg>
<span style="left:1020.2px;top:736.9px;font-size:6.5px;color:#222;display:inline-block;width:20px;text-align:justify;letter-spacing:-0.1px;">Even...</span>
<svg style="left:1010px;top:735.3px" width="10" height="9" viewBox="0 0 10 9"><rect x="0.5" y="0.8" width="8.4" height="7.6" fill="#b9bdc0" stroke="#8d9296" stroke-width="0.6"/><rect x="1.6" y="2" width="2.4" height="2.4" fill="#6a7a8a"/><rect x="5" y="2" width="2.6" height="2.4" fill="#dfe3e6"/><rect x="1.6" y="5.4" width="6" height="1.6" fill="#8a9aa0"/></svg>
<div style="left:0px;top:757px;width:1061px;height:16.5px;background:#f0f0f0;"></div>
<div style="left:0px;top:773.5px;width:1061px;height:1px;background:#d4d4d4;"></div>
<div style="left:0px;top:774.5px;width:1061px;height:8px;background:#fff;"></div>
<span class="" style="left:781px;top:777.3px;font-size:7px;color:#333;">Macr</span>
<span class="" style="left:870px;top:777.3px;font-size:7px;color:#333;">Untitled</span>
<span class="" style="left:959px;top:777.3px;font-size:7px;color:#333;">Offline</span>
<svg style="left:1040px;top:0" width="27" height="782" viewBox="0 0 27 782"><path d="M9.2 0 Q19 6 21.8 22 L22.4 782 L27 782 L27 0 Z" fill="#f9fafb"/><rect x="22.6" y="22" width="4.4" height="760" fill="#eff2f5"/><path d="M22.6 22 L27 22 L27 0 L20 0 Z" fill="#f1f3f6"/><path d="M9.2 0 Q18.6 6 21.6 21" stroke="#3a3a3a" stroke-width="0.8" fill="none"/><path d="M21.6 21 L21.8 34" stroke="#bbb" stroke-width="0.6" fill="none"/></svg>
<div style="left:992.6px;top:3.3px;width:7.2px;height:1px;background:#555;"></div>
<svg style="left:1018px;top:0" width="8" height="8" viewBox="0 0 8 8"><rect x="1.2" y="1.6" width="4.8" height="4.6" fill="none" stroke="#222" stroke-width="1.1"/><path d="M2.6 1.4 V0.4 H7 V4.6 H6" stroke="#222" stroke-width="0.9" fill="none"/></svg>
<svg style="left:1044.5px;top:0" width="8" height="8" viewBox="0 0 8 8"><path d="M0.8 0.6 L6.4 6.2 M6.4 0.6 L0.8 6.2" stroke="#333" stroke-width="0.9"/></svg>
</div></body></html>
